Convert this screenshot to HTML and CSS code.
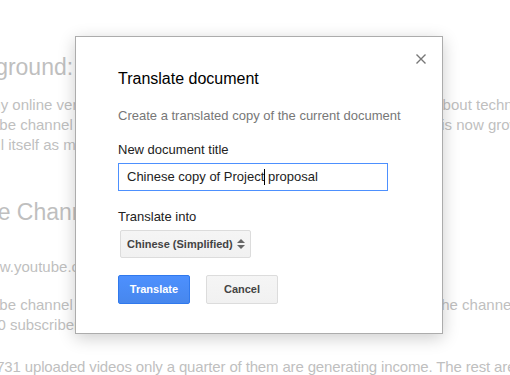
FILE: index.html
```html
<!DOCTYPE html>
<html lang="en">
<head>
    <meta charset="UTF-8">
    <title>Translate document</title>
    <link rel="stylesheet" href="styles.css">
</head>
<body>

    <!-- Document behind the dialog -->
    <div class="doc">
        <h1>Background:</h1>
        <p>Lately my online venture has become a really popular and successful site about technology and gadgets.</p>
        <p>A YouTube channel I started a few years ago with my brother and sister Jo is now growing.</p>
        <p>It will sell itself as my main source of income in the next few years.</p>

        <h2>Online Channel</h2>
        <p class="url">Site: www.youtube.com/user/channel</p>

        <p>A YouTube channel is one of the easiest ways to make money online, and the channel</p>
        <p class="gap">has 5000 subscribers and more than 2 million views.</p>

        <p class="last">Of the 1731 uploaded videos only a quarter of them are generating income. The rest are not.</p>
    </div>

    <!-- Translate dialog -->
    <div class="dialog">
        <div class="dialog-close">
            <svg width="10" height="10" viewBox="0 0 10 10">
                <path d="M0.5 0.5 L9.5 9.5 M9.5 0.5 L0.5 9.5" stroke="#777" stroke-width="1.4" fill="none"/>
            </svg>
        </div>
        <div class="dialog-title">Translate document</div>
        <div class="desc">Create a translated copy of the current document</div>

        <div class="label">New document title</div>
        <div class="text-input">Chinese copy of Project<span class="caret"></span> proposal</div>

        <div class="label">Translate into</div>
        <div class="select">
            <span>Chinese (Simplified)</span>
            <svg width="8" height="10" viewBox="0 0 8 10">
                <polygon points="0,4 4,0 8,4" fill="#666"/>
                <polygon points="0,6 4,10 8,6" fill="#666"/>
            </svg>
        </div>

        <div class="buttons">
            <button class="btn btn-blue">Translate</button>
            <button class="btn">Cancel</button>
        </div>
    </div>

</body>
</html>
```

FILE: styles.css
```css
/* General */
body {
    margin: 0;
    width: 510px;
    height: 375px;
    overflow: hidden;
    position: relative;
    background: #fff;
    font-family: "Liberation Sans", Arial, sans-serif;
}

/* Faded document in the background */
.doc {
    margin-left: -56px;
    padding-top: 53px;
    color: #bfbfbf;
    white-space: nowrap;
}

.doc h1,
.doc h2 {
    font-size: 23px;
    font-weight: normal;
    line-height: 28px;
    margin: 0;
}

.doc h1 {
    margin-bottom: 14px;
}

.doc h2 {
    margin: 43px 0 31px;
}

.doc p {
    margin: 0;
    font-size: 15px;
    line-height: 20px;
}

.doc .url {
    margin-bottom: 18px;
}

.doc .gap {
    margin-bottom: 22px;
}

.doc .last {
    letter-spacing: -0.15px;
}

/* Dialog */
.dialog {
    position: absolute;
    left: 75px;
    top: 36px;
    width: 282px;
    padding: 30px 42px 29px;
    background: #fff;
    border: 1px solid #acacac;
    box-shadow: 0 4px 16px rgba(0, 0, 0, 0.2);
    color: #222;
}

.dialog-close {
    position: absolute;
    top: 17px;
    right: 16px;
    width: 10px;
    height: 10px;
}

.dialog-close svg {
    display: block;
}

.dialog-title {
    font-size: 16px;
    line-height: 24px;
    margin-bottom: 17px;
    color: #000;
}

.desc {
    font-size: 13px;
    line-height: 16px;
    color: #777;
    margin-bottom: 18px;
    white-space: nowrap;
}

.label {
    font-size: 13px;
    line-height: 16px;
    margin-bottom: 5px;
}

/* Title field */
.text-input {
    box-sizing: border-box;
    width: 270px;
    height: 28px;
    padding: 0 8px;
    border: 1px solid #4d90fe;
    font-size: 13px;
    line-height: 26px;
    color: #222;
    margin-bottom: 18px;
    white-space: nowrap;
}

.caret {
    display: inline-block;
    width: 1px;
    height: 16px;
    background: #000;
    vertical-align: -4px;
    margin-right: -1px;
}

/* Language select */
.select {
    box-sizing: border-box;
    display: flex;
    align-items: center;
    justify-content: space-between;
    width: 131px;
    height: 28px;
    margin-left: 2px;
    padding: 0 5px 0 6px;
    background: linear-gradient(#f5f5f5, #f1f1f1);
    border: 1px solid #dcdcdc;
    border-radius: 2px;
    font-size: 11px;
    font-weight: bold;
    color: #444;
}

.select svg {
    display: block;
}

/* Buttons */
.buttons {
    display: flex;
    gap: 16px;
    margin-top: 17px;
}

.btn {
    box-sizing: border-box;
    min-width: 72px;
    height: 29px;
    padding: 0 8px;
    background: linear-gradient(#f5f5f5, #f1f1f1);
    border: 1px solid #dcdcdc;
    border-radius: 2px;
    font-family: "Liberation Sans", Arial, sans-serif;
    font-size: 11px;
    font-weight: bold;
    line-height: 27px;
    color: #444;
}

.btn-blue {
    background: linear-gradient(#4d90fe, #4787ed);
    border-color: #3079ed;
    color: #fff;
}
```
